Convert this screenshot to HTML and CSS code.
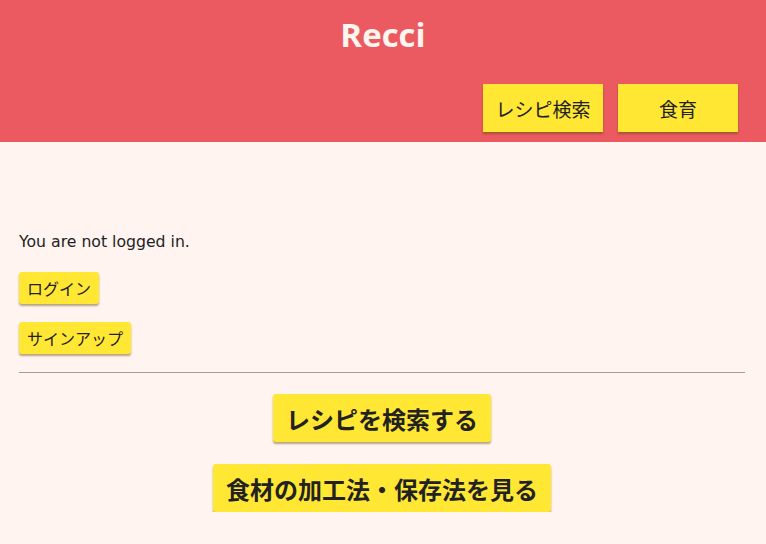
FILE: index.html
```html
<!DOCTYPE html>
<html lang="ja">
<head>
<meta charset="utf-8">
<title>Recci</title>
<link rel="stylesheet" href="styles.css">
</head>
<body>
<header class="site-header">
  <h1 class="logo">Recci</h1>
  <nav class="nav">
    <a class="btn nav-btn" href="#">レシピ検索</a>
    <a class="btn nav-btn" href="#">食育</a>
  </nav>
</header>
<main class="main">
  <p class="status">You are not logged in.</p>
  <div class="auth">
    <a class="btn small-btn" href="#">ログイン</a>
    <a class="btn small-btn" href="#">サインアップ</a>
  </div>
  <hr class="divider">
  <div class="actions">
    <a class="btn big-btn" href="#">レシピを検索する</a>
    <a class="btn big-btn" href="#">食材の加工法・保存法を見る</a>
  </div>
</main>
</body>
</html>
```
FILE: styles.css
```css
html, body {
  margin: 0;
  padding: 0;
  background: #fff4f0;
  font-family: "Noto Sans CJK JP", "Noto Sans", sans-serif;
  color: #222;
}
.site-header {
  background: #ea5a60;
  height: 142px;
  box-sizing: border-box;
  padding-top: 13px;
  display: flex;
  flex-direction: column;
}
.logo {
  margin: 0;
  text-align: center;
  color: #fff4ee;
  font-family: "Open Sans", "Noto Sans", sans-serif;
  font-weight: 700;
  font-size: 33px;
  line-height: 44px;
}
.nav {
  display: flex;
  justify-content: flex-end;
  gap: 15px;
  padding-right: 28px;
  margin-top: 27px;
}
.btn {
  display: inline-flex;
  align-items: center;
  justify-content: center;
  background: #ffe733;
  color: #222;
  text-decoration: none;
  border-radius: 3px;
  box-shadow: 0 2px 2px rgba(90, 70, 0, 0.45);
  box-sizing: border-box;
}
.nav-btn {
  width: 120px;
  height: 48px;
  font-size: 19px;
  border-radius: 0;
}
.main {
  padding: 0 21px 0 19px;
}
.status {
  margin: 0;
  padding-top: 89px;
  font-family: "DejaVu Sans", "Noto Sans CJK JP", sans-serif;
  font-size: 15.7px;
  line-height: 22px;
}
.auth {
  display: flex;
  flex-direction: column;
  align-items: flex-start;
  gap: 18px;
  margin-top: 19px;
}
.small-btn {
  height: 32px;
  padding: 0 8px;
  font-size: 16px;
}
.divider {
  border: 0;
  border-top: 1px solid #a89a98;
  margin: 18px 0 0 0;
}
.actions {
  display: flex;
  flex-direction: column;
  align-items: center;
  gap: 22px;
  margin-top: 21px;
}
.big-btn {
  height: 48px;
  padding: 0 13px;
  font-size: 24px;
  font-weight: 700;
}
```
